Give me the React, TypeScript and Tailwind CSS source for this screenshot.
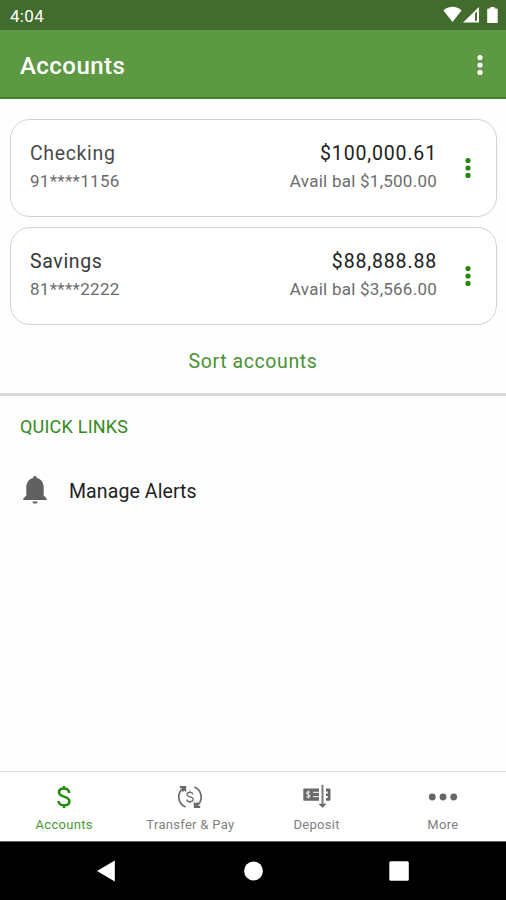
import React from "react";

const accounts = [
  { name: "Checking", number: "91****1156", balance: "$100,000.61", available: "$1,500.00", tone: "text-[#4a4a4a]" },
  { name: "Savings", number: "81****2222", balance: "$88,888.88", available: "$3,566.00", tone: "text-[#383838]" },
];

function Dots({ className }: { className: string }) {
  return (
    <svg width="8" height="24" viewBox="0 0 8 24" fill="currentColor" className={className}>
      <circle cx="4" cy="4.6" r="2.6" />
      <circle cx="4" cy="12" r="2.6" />
      <circle cx="4" cy="19.4" r="2.6" />
    </svg>
  );
}

function StatusIcons() {
  return (
    <svg width="56" height="18" viewBox="0 0 56 18" fill="#ffffff">
      <path d="M0.500 4.600C5.300-.4 13.700-.4 18.500 4.600L9.500 16Z" />
      <path fillRule="evenodd" d="M20 16.500L36 1V16.500ZM32 7.500V14.800H34V5.600Z" />
      <path d="M47.300 1H51.700V2.500H53.500Q54.700 2.500 54.700 3.700V17H44.200V3.700Q44.200 2.500 45.400 2.500H47.300Z" />
    </svg>
  );
}

function TransferIcon() {
  return (
    <svg width="26" height="26" viewBox="0 0 26 26" fill="none" stroke="#6a6a6a" strokeWidth="1.700">
      <path d="M8.600 23C0 19.300 0 8.500 6.200 4.400" />
      <path fill="#6a6a6a" stroke="none" d="M2.800 2H9.200V8.400L7.400 6.600L5.800 8L4.200 6.200L6 4.200H2.800Z" />
      <path d="M17.400 3C26 6.700 26 17.500 19.800 21.600" />
      <path fill="#6a6a6a" stroke="none" d="M23.200 24H16.800V17.600L18.600 19.400L20.200 18L21.800 19.800L20 21.800H23.200Z" />
      <path strokeWidth="1.200" d="M16 10.200C15.600 8.900 14.600 8.300 13 8.300C11.300 8.300 10 9.100 10 10.500C10 13.600 16.200 12.100 16.200 15.300C16.200 16.900 14.800 17.700 13 17.700C11.200 17.700 10 16.900 9.700 15.500M13 6.700V8.300M13 17.700V19.300" />
    </svg>
  );
}

function DepositIcon() {
  return (
    <svg width="30" height="26" viewBox="0 0 30 26" fill="none">
      <path fill="#6a6a6a" d="M2.300 4.500H17V16.800H2.300Q1.300 16.800 1.300 15.800V5.500Q1.300 4.500 2.300 4.500Z" />
      <path stroke="#dedede" strokeWidth="1.200" d="M8 8.400C7.500 7.700 4.600 7.600 4.600 9.200C4.600 10.900 8 10 8 12C8 13.600 5 13.700 4.400 12.500M6.300 6.600V14.600M11 8.300H17M11 12.600H17" />
      <path stroke="#7a7a7a" strokeWidth="2" d="M20.500 .8V21" />
      <path fill="#6a6a6a" d="M16.300 19.700H24.700L20.500 23.700Z" />
      <path fill="#6a6a6a" d="M24 4.500H27.200Q28.500 4.500 28.500 5.800V15.500Q28.500 16.800 27.200 16.800H24V14H25.800V12H24V9.500H25.800V7.500H24Z" />
    </svg>
  );
}

export default function App() {
  return (
    <div className="flex h-[900px] w-[506px] flex-col overflow-hidden bg-[#fefefe] font-[Roboto,sans-serif]">
      <div className="flex h-[30px] shrink-0 items-center justify-between bg-[#426c2d] pr-[7px] pl-[10px] text-white">
        <span className="pt-[1px] text-[17px] leading-[30px] tracking-[0.3px]">4:04</span>
        <StatusIcons />
      </div>
      <header className="flex h-[69px] shrink-0 items-center justify-between border-b-2 border-[#44832a] bg-[#5c9942] pr-[22px] pl-[20px] text-white">
        <h1 className="pt-[4px] text-[24px] font-medium tracking-[0.450px]">Accounts</h1>
        <Dots className="mt-[2px] text-white" />
      </header>

      <main className="flex flex-1 flex-col">
        <section className="flex flex-col gap-[10px] pt-[20px] pr-[9px] pl-[10px]">
          {accounts.map((a) => (
            <div key={a.name} className="flex h-[98px] items-center rounded-[20px] border-[1.500px] border-[#d2d2d2] bg-white pr-[24px] pl-[19px]">
              <div className="flex flex-1 flex-col pb-[1px]">
                <span className={`text-[19.500px] leading-[28px] tracking-[0.650px] ${a.tone}`}>{a.name}</span>
                <span className="-mt-[1px] text-[17px] leading-[28px] tracking-[0.3px] text-[#6c6c6c]">{a.number}</span>
              </div>
              <div className="flex flex-col items-end pb-[1px]">
                <span className="text-[19.500px] leading-[28px] tracking-[0.850px] text-[#202020]">{a.balance}</span>
                <span className="-mt-[1px] text-[17px] leading-[28px] tracking-[0.250px] text-[#6c6c6c]">Avail bal {a.available}</span>
              </div>
              <Dots className="ml-[27px] text-[#25860b]" />
            </div>
          ))}
        </section>
        <button className="mt-[22px] self-center text-[19.500px] leading-[30px] tracking-[0.600px] text-[#4a9136]">Sort accounts</button>
        <div className="mt-[16px] h-[3px] bg-[#dadada]" />
        <h2 className="mt-[18px] pl-[20px] text-[18px] leading-[26px] tracking-[0.220px] text-[#338a1b]">QUICK LINKS</h2>
        <div className="mt-[34px] flex h-[34px] items-center pl-[23px] text-[#222222]">
          <svg width="24" height="28" viewBox="0 0 24 28" fill="#606060" className="mb-[3px]">
            <path d="M12 0C10.800 0 10.200.8 10.200 2C5.600 3.200 3.300 7 3.300 11.500V19.500L0.300 22.500V24H23.700V22.500L20.700 19.500V11.500C20.700 7 18.400 3.200 13.800 2C13.800.8 13.200 0 12 0ZM9.300 25.400H14.700C14.400 27 13.400 27.600 12 27.600S9.600 27 9.300 25.400Z" />
          </svg>
          <span className="ml-[22px] pt-[2px] text-[19.500px] tracking-[0.100px]">Manage Alerts</span>
        </div>
      </main>

      <nav className="grid h-[70px] shrink-0 grid-cols-4 border-t-[1.500px] border-[#dcdcdc] bg-white pl-[1px] text-[13px] text-[#808080]">
        <div className="flex flex-col items-center pt-[12px] text-[#4a9836]">
          <svg width="26" height="26" viewBox="0 0 26 26" fill="none" stroke="#25890c" strokeWidth="2.500">
            <path d="M18.200 9C18 6 16 4.600 13 4.600C10 4.600 8 6 8 8.300C8 14 18.400 11.300 18.400 17.500C18.400 20 16.300 21.300 13 21.300C9.700 21.300 7.700 19.800 7.500 17M13 2V5M13 21V24" />
          </svg>
          <span className="mt-[5px] leading-[20px] tracking-[0.3px]">Accounts</span>
        </div>
        <div className="flex flex-col items-center pt-[12px]"><TransferIcon /><span className="mt-[5px] leading-[20px] tracking-[0.3px]">Transfer &amp; Pay</span></div>
        <div className="flex flex-col items-center pt-[12px]"><DepositIcon /><span className="mt-[5px] leading-[20px] tracking-[0.3px]">Deposit</span></div>
        <div className="flex flex-col items-center pt-[12px]">
          <svg width="30" height="26" viewBox="0 0 30 26" fill="#666666">
            <circle cx="4.300" cy="13" r="3.400" /><circle cx="15" cy="13" r="3.400" /><circle cx="25.700" cy="13" r="3.400" />
          </svg>
          <span className="mt-[5px] leading-[20px] tracking-[0.3px]">More</span>
        </div>
      </nav>

      <footer className="flex h-[59px] shrink-0 items-center justify-between border-t border-[#666666] bg-black pr-[96px] pl-[96px]">
        <svg width="22" height="22" viewBox="0 0 22 22" fill="white"><path d="M1 11L18.800.5V21.500Z" /></svg>
        <svg width="20" height="20" viewBox="0 0 20 20" fill="white"><circle cx="10.500" cy="10" r="9.400" /></svg>
        <svg width="22" height="22" viewBox="0 0 22 22" fill="white"><rect x="1.300" y="1.300" width="19.500" height="19.500" rx="1.500" /></svg>
      </footer>
    </div>
  );
}
